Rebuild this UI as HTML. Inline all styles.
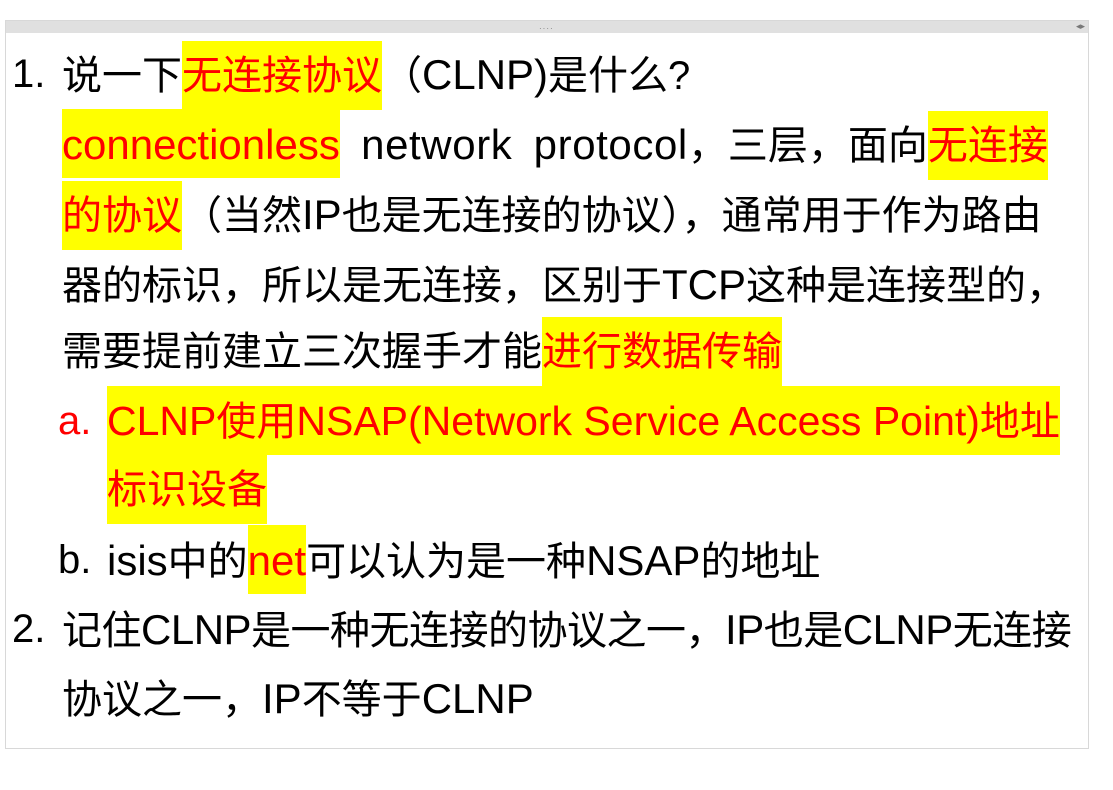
<!DOCTYPE html>
<html><head><meta charset="utf-8"><style>
html,body{margin:0;padding:0;background:#fff;width:1113px;height:790px;overflow:hidden}
.box{position:absolute;left:5px;top:20px;width:1082px;height:727px;border:1px solid #d8d8d8;background:#fff}
.bar{position:absolute;left:0;top:0;width:1082px;height:12px;background:#e0e0e0}
.dots{position:absolute;left:533px;top:3px;font:8px sans-serif;color:#777;letter-spacing:1px}
.arr{position:absolute;right:3px;top:0px;font:9px sans-serif;color:#777}
.l{position:absolute;white-space:nowrap;font-family:"Liberation Sans","Noto Sans CJK SC",sans-serif;font-size:40px;line-height:71px;height:69px;color:#000}
.e{font-size:42px}
.h{background:#ff0;color:#f00;display:inline-block;height:69px}
.r{color:#f00}
</style></head><body>
<div class="box"><div class="bar"><span class="dots">····</span><span class="arr">◂▸</span></div></div>
<div class="l" style="left:12px;top:39px">1.</div>
<div class="l" style="left:62px;top:39px">说一下<span class="h">无连接协议</span>（<span class="e">CLNP)</span>是什么?</div>
<div class="l" style="left:62px;top:109px"><span class="h e">connectionless</span><span class="e" style="word-spacing:9px;letter-spacing:0.6px"> network protocol</span>，三层，面向<span class="h">无连接</span></div>
<div class="l" style="left:62px;top:179px"><span class="h">的协议</span>（当然<span class="e">IP</span>也是无连接的协议），通常用于作为路由</div>
<div class="l" style="left:62px;top:249px">器的标识，所以是无连接，区别于<span class="e">TCP</span>这种是连接型的，</div>
<div class="l" style="left:62px;top:317px">需要提前建立三次握手才能<span class="h">进行数据传输</span></div>
<div class="l r" style="left:58px;top:386px">a.</div>
<div class="l" style="left:107px;top:386px"><span class="h"><span class="e" style="font-size:41px">CLNP</span>使用<span class="e" style="font-size:41px">NSAP(Network Service Access Point)</span>地址</span></div>
<div class="l" style="left:107px;top:455px"><span class="h">标识设备</span></div>
<div class="l" style="left:58px;top:525px">b.</div>
<div class="l" style="left:107px;top:525px"><span class="e">isis</span>中的<span class="h e">net</span>可以认为是一种<span class="e">NSAP</span>的地址</div>
<div class="l" style="left:12px;top:594px">2.</div>
<div class="l" style="left:62px;top:594px;letter-spacing:-0.5px">记住<span class="e">CLNP</span>是一种无连接的协议之一，<span class="e">IP</span>也是<span class="e">CLNP</span>无连接</div>
<div class="l" style="left:62px;top:663px">协议之一，<span class="e">IP</span>不等于<span class="e">CLNP</span></div>
</body></html>
